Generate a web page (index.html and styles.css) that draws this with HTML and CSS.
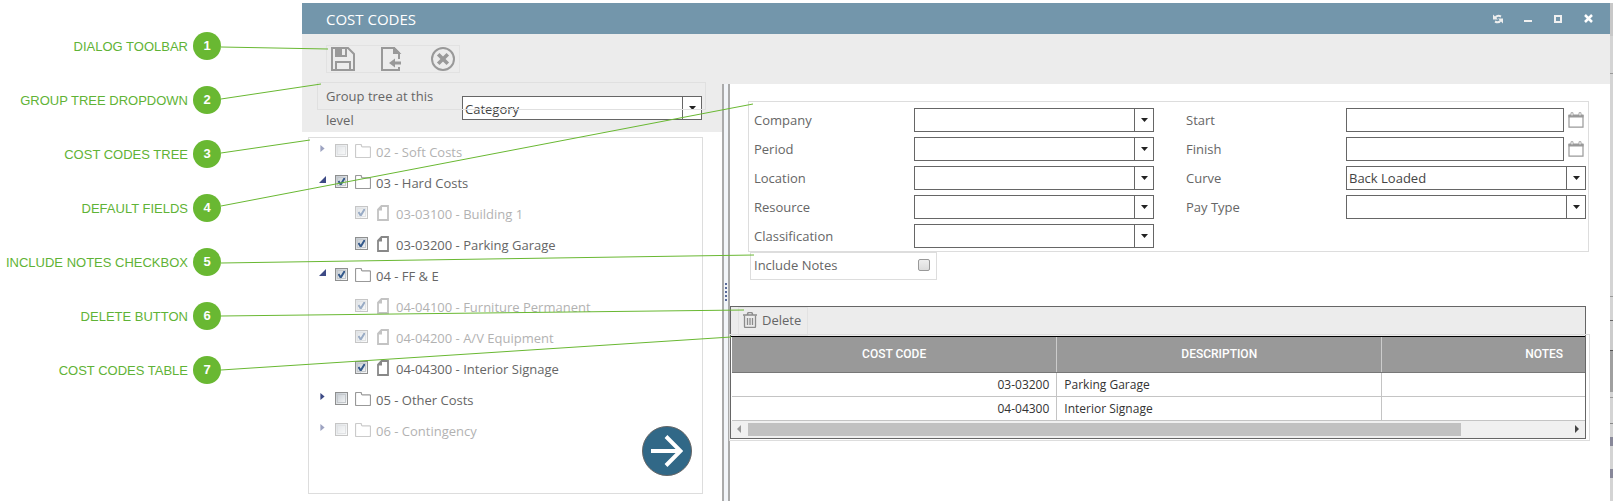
FILE: index.html
```
<!DOCTYPE html>
<html lang="en">
<head>
    <meta charset="UTF-8">
    <meta name="viewport" content="width=device-width, initial-scale=1.0">
    <title>Cost Codes</title>
    <link rel="stylesheet" href="styles.css">
</head>
<body>

    <!-- Shared icons -->
    <svg class="sprite" aria-hidden="true">
        <symbol id="folder" viewBox="0 0 16 14">
            <path d="M1.500 .5h4q1 0 1 1v.5q0 .8 1 .8h7q1 0 1 1v8.700q0 1-1 1h-13q-1 0-1-1v-11q0-1 1-1z" fill="none" stroke="currentColor" stroke-width="1.200"/>
        </symbol>
        <symbol id="doc" viewBox="0 0 12 16">
            <path d="M4.500 1H11v14H1V4.500z" fill="none" stroke="currentColor" stroke-width="1.800"/>
            <path d="M5 .5v5H.5z" fill="currentColor"/>
        </symbol>
        <symbol id="calendar" viewBox="0 0 16 16">
            <path d="M1 3.500h14v11.700H1z" fill="none" stroke="currentColor" stroke-width="1.200"/>
            <path d="M.5 2.500h15v3H.5z" fill="currentColor"/>
            <path d="M3 .7h2v3H3zM11 .7h2v3h-2z" fill="#fff" stroke="currentColor" stroke-width=".8"/>
        </symbol>
    </svg>

    <main class="page">
        <ol class="callouts">
            <li>DIALOG TOOLBAR <b>1</b></li>
            <li>GROUP TREE DROPDOWN <b>2</b></li>
            <li>COST CODES TREE <b>3</b></li>
            <li>DEFAULT FIELDS <b>4</b></li>
            <li>INCLUDE NOTES CHECKBOX <b>5</b></li>
            <li>DELETE BUTTON <b>6</b></li>
            <li>COST CODES TABLE <b>7</b></li>
        </ol>

        <section class="dialog">
            <header class="titlebar">
                <h1>COST CODES</h1>
                <button aria-label="Refresh">
                    <svg width="10" height="10" viewBox="0 0 10 10" fill="none" stroke="#eee" stroke-width="2"><path d="M2 4Q4 .5 8 2.500M8 6Q6 9.500 2 7.500"/><path d="M0 .5v5h5zM10 9.500v-5H5z" fill="#eee" stroke="none"/></svg>
                </button>
                <button aria-label="Minimize">
                    <svg width="8" height="8" viewBox="0 0 8 8"><path d="M0 5h8v2H0z" fill="#f0f0f0"/></svg>
                </button>
                <button aria-label="Maximize">
                    <svg width="8" height="8" viewBox="0 0 8 8"><path d="M1 1h6v6H1z" fill="none" stroke="#f0f0f0" stroke-width="2"/></svg>
                </button>
                <button aria-label="Close">
                    <svg width="9" height="9" viewBox="0 0 9 9"><path d="M1 1l7 7M8 1L1 8" stroke="#fff" stroke-width="2.500"/></svg>
                </button>
            </header>

            <div class="toolbar">
                <div class="tools">
                    <button aria-label="Save">
                        <svg width="24" height="24" viewBox="0 0 24 24" fill="none" stroke="#999" stroke-width="2"><path d="M1 1h16l6 6v16H1z"/><path d="M5 23v-8h14v8"/><path d="M5 1v8h10V1"/><path d="M5 1h5v8H5z" fill="#999"/></svg>
                    </button>
                    <button aria-label="Save and close">
                        <svg width="24" height="24" viewBox="0 0 24 24" fill="none" stroke="#999" stroke-width="2"><path d="M18 12V6l-5-5H1v22h17v-3"/><path d="M13 1v5h5z" fill="#999"/><path d="M20 16h-8" stroke-width="3"/><path d="M14 11.500v9L8 16z" fill="#999" stroke="none"/></svg>
                    </button>
                    <button aria-label="Cancel">
                        <svg width="24" height="24" viewBox="0 0 24 24" fill="none" stroke="#999"><circle cx="12" cy="12" r="11" stroke-width="2"/><path d="M7.200 7.200l9.600 9.600M16.800 7.200l-9.600 9.600" stroke-width="3.600"/></svg>
                    </button>
                </div>
            </div>

            <div class="panes">
                <div class="left">
                    <div class="group">
                        <label for="groupLevel">Group tree at this level</label>
                        <select id="groupLevel"><option>Category</option></select>
                        <span class="group-outline"></span>
                    </div>

                    <div class="tree-box">
                        <ul class="tree">
                            <li class="faded"><i class="closed"></i><input type="checkbox" id="c02"><svg class="folder"><use href="#folder"/></svg><label for="c02">02 - Soft Costs</label></li>
                            <li><i class="open"></i><input type="checkbox" id="c03" checked><svg class="folder"><use href="#folder"/></svg><label for="c03">03 - Hard Costs</label></li>
                            <li class="child faded"><input type="checkbox" id="c03100" checked><svg class="doc"><use href="#doc"/></svg><label for="c03100">03-03100 - Building 1</label></li>
                            <li class="child"><input type="checkbox" id="c03200" checked><svg class="doc"><use href="#doc"/></svg><label for="c03200">03-03200 - Parking Garage</label></li>
                            <li><i class="open"></i><input type="checkbox" id="c04" checked><svg class="folder"><use href="#folder"/></svg><label for="c04">04 - FF &amp; E</label></li>
                            <li class="child faded"><input type="checkbox" id="c04100" checked><svg class="doc"><use href="#doc"/></svg><label for="c04100">04-04100 - Furniture Permanent</label></li>
                            <li class="child faded"><input type="checkbox" id="c04200" checked><svg class="doc"><use href="#doc"/></svg><label for="c04200">04-04200 - A/V Equipment</label></li>
                            <li class="child"><input type="checkbox" id="c04300" checked><svg class="doc"><use href="#doc"/></svg><label for="c04300">04-04300 - Interior Signage</label></li>
                            <li><i class="closed"></i><input type="checkbox" id="c05"><svg class="folder"><use href="#folder"/></svg><label for="c05">05 - Other Costs</label></li>
                            <li class="faded"><i class="closed"></i><input type="checkbox" id="c06"><svg class="folder"><use href="#folder"/></svg><label for="c06">06 - Contingency</label></li>
                        </ul>
                        <button class="move" aria-label="Add to table">
                            <svg width="32" height="32" viewBox="0 0 32 32" fill="none" stroke="#fff" stroke-width="4"><path d="M0 16h29M15 1.500L29.500 16 15 30.500"/></svg>
                        </button>
                    </div>
                </div>

                <div class="splitter"><span></span></div>

                <div class="right">
                    <form class="fields">
                        <label for="company">Company</label>
                        <select id="company"><option></option></select>
                        <label for="start" class="second">Start</label>
                        <div class="date"><input type="text" id="start"><button type="button" aria-label="Pick start date"><svg width="16" height="16"><use href="#calendar"/></svg></button></div>

                        <label for="period">Period</label>
                        <select id="period"><option></option></select>
                        <label for="finish" class="second">Finish</label>
                        <div class="date"><input type="text" id="finish"><button type="button" aria-label="Pick finish date"><svg width="16" height="16"><use href="#calendar"/></svg></button></div>

                        <label for="location">Location</label>
                        <select id="location"><option></option></select>
                        <label for="curve" class="second">Curve</label>
                        <select id="curve"><option>Back Loaded</option></select>

                        <label for="resource">Resource</label>
                        <select id="resource"><option></option></select>
                        <label for="paytype" class="second">Pay Type</label>
                        <select id="paytype"><option></option></select>

                        <label for="classification">Classification</label>
                        <select id="classification"><option></option></select>
                    </form>

                    <div class="notes">
                        <label for="notes">Include Notes</label>
                        <input type="checkbox" id="notes">
                    </div>

                    <div class="grid">
                        <div class="grid-bar">
                            <button>
                                <svg width="14" height="16" viewBox="0 0 14 16" fill="none" stroke="#8c8c8c"><path d="M0 3h14M4.500 2.500q0-2 1.500-2h2q1.500 0 1.500 2" stroke-width="1.500"/><path d="M1.500 3.500v11q0 1 1 1h9q1 0 1-1v-11M4.500 6v7M7 6v7M9.500 6v7" stroke-width="1.300"/></svg>
                                Delete
                            </button>
                        </div>
                        <div class="grid-view">
                            <table>
                                <thead>
                                    <tr><th>COST CODE</th><th>DESCRIPTION</th><th>NOTES</th></tr>
                                </thead>
                                <tbody>
                                    <tr><td class="code">03-03200</td><td>Parking Garage</td><td></td></tr>
                                    <tr><td class="code">04-04300</td><td>Interior Signage</td><td></td></tr>
                                </tbody>
                            </table>
                        </div>
                        <div class="scroll">
                            <i class="scroll-left"></i>
                            <div class="track"><div class="thumb"></div></div>
                            <i class="scroll-right"></i>
                        </div>
                        <span class="grid-outline"></span>
                    </div>
                </div>
            </div>
        </section>

        <!-- Edge of the window behind the dialog -->
        <div class="behind"></div>

        <!-- Callout lines -->
        <svg class="lines" width="800" height="500">
            <path d="M221 47L328 49M221 99L321 84M221 153L310 140M221 206L753 104M221 263L754 255M221 316L744 310M221 370L731 337"/>
        </svg>
    </main>

</body>
</html>
```
FILE: styles.css
```
* {
    box-sizing: border-box;
}

body {
    margin: 0;
    background-color: #fff;
    font-family: "Open Sans", "Noto Sans", sans-serif;
    font-size: 13px;
    color: #666;
}

button {
    padding: 0;
    border: none;
    background: none;
    font: inherit;
    color: inherit;
    cursor: pointer;
}

svg {
    display: block;
    flex: none;
}

.sprite {
    position: absolute;
    width: 0;
    height: 0;
}

.page {
    position: relative;
    display: flex;
    padding: 3px 3px 3px 0;
}

/* Callouts */
.callouts {
    flex: none;
    width: 302px;
    margin: 0;
    padding: 16px 81px 0 0;
    list-style: none;
    font-family: "Liberation Sans", Arial, sans-serif;
    font-size: 13px;
    color: #5fb336;
}

.callouts li {
    display: flex;
    align-items: center;
    justify-content: flex-end;
    gap: 5px;
    height: 54px;
}

.callouts b {
    width: 28px;
    height: 28px;
    border-radius: 50%;
    background-color: #69b832;
    color: #fff;
    line-height: 28px;
    text-align: center;
}

.lines {
    position: absolute;
    top: 0;
    left: 0;
    pointer-events: none;
    fill: none;
    stroke: #69b832;
}

/* Dialog */
.dialog {
    flex: 1;
    min-width: 0;
}

.titlebar {
    display: flex;
    align-items: center;
    gap: 2px;
    height: 31px;
    padding: 0 8px 0 24px;
    background-color: #7396ab;
}

.titlebar h1 {
    flex: 1;
    margin: 0;
    font-size: 15px;
    font-weight: normal;
    color: #fff;
}

.titlebar button {
    display: flex;
    align-items: center;
    justify-content: center;
    width: 28px;
    height: 24px;
}

.toolbar {
    display: flex;
    padding: 11px 24px;
    background-color: #ececec;
}

.tools {
    display: flex;
    gap: 26px;
    padding: 1px 4px;
    border: 1px solid #e2e2e2;
}

.panes {
    display: flex;
}

.left {
    flex: none;
    width: 420px;
}

.group {
    position: relative;
    display: flex;
    align-items: center;
    padding: 0 20px 0 24px;
    background-color: #ececec;
    line-height: 24px;
}

.group label {
    width: 136px;
    padding-right: 20px;
}

.group select {
    flex: 1;
}

.group-outline {
    position: absolute;
    top: -2px;
    left: 15px;
    right: 16px;
    height: 28px;
    border: 1px solid #e0e0e0;
    pointer-events: none;
}

select {
    appearance: none;
    width: 100%;
    height: 24px;
    padding: 0 22px 1px 2px;
    border: 1px solid #666;
    border-radius: 0;
    background-color: #fff;
    background-image:
        url("data:image/svg+xml,%3Csvg xmlns='http://www.w3.org/2000/svg' width='7' height='4'%3E%3Cpath d='M0 0h7L3.500 4z' fill='%23222'/%3E%3C/svg%3E"),
        linear-gradient(#666, #666);
    background-size: 7px 4px, 1px 100%;
    background-position: right 5px center, right 18px top;
    background-repeat: no-repeat;
    font: inherit;
    color: #444;
}

/* Tree */
.tree-box {
    position: relative;
    min-height: 357px;
    margin: 5px 19px 7px 6px;
    border: 1px solid #ddd;
}

.tree {
    margin: 0;
    padding: 0;
    list-style: none;
}

.tree li {
    display: flex;
    align-items: center;
    height: 31px;
    padding: 0 0 6px 10px;
}

.tree li.child {
    padding-left: 46px;
}

.tree .faded {
    opacity: 0.5;
}

.tree i {
    width: 7px;
    height: 7px;
    margin: 0 9px 4px 0;
    background-color: #3d4a85;
}

.tree i.closed {
    clip-path: polygon(20% 0, 80% 50%, 20% 100%);
}

.tree i.open {
    clip-path: polygon(100% 0, 100% 100%, 0 100%);
}

.tree input {
    appearance: none;
    flex: none;
    width: 13px;
    height: 13px;
    margin: 0;
    border: 1px solid #8e8f8f;
    outline: 1px solid #c4c8cc;
    outline-offset: -3px;
    background: linear-gradient(135deg, #c2c9d0, #fafafa);
}

.tree input:checked {
    background:
        url("data:image/svg+xml,%3Csvg xmlns='http://www.w3.org/2000/svg' width='11' height='11'%3E%3Cpath d='M2.500 5l2.200 3.500L9 1.500' fill='none' stroke='%23355a8c' stroke-width='2'/%3E%3C/svg%3E") center no-repeat,
        linear-gradient(135deg, #c2c9d0, #fafafa);
}

.tree .folder {
    width: 16px;
    height: 14px;
    margin: 0 5px 0 7px;
    color: #999;
}

.tree .doc {
    width: 12px;
    height: 16px;
    margin: 0 7px 0 9px;
    color: #888;
}

.tree label {
    padding-top: 2px;
    line-height: 20px;
}

.move {
    position: absolute;
    right: 10px;
    bottom: 17px;
    display: flex;
    align-items: center;
    justify-content: center;
    width: 50px;
    height: 50px;
    border: 1px solid #666;
    border-radius: 50%;
    background-color: #316887;
}

.splitter {
    display: flex;
    align-items: center;
    flex: none;
    width: 8px;
    padding-left: 1px;
    border: solid #aaa;
    border-width: 0 2px;
    background-color: #f2f5f9;
}

.splitter span {
    width: 2px;
    height: 19px;
    background: repeating-linear-gradient(#5a6a9a 0 2px, transparent 2px 4px);
}

/* Right pane */
.right {
    flex: 1;
    min-width: 0;
    padding: 17px 21px 0 0;
}

.fields {
    display: grid;
    grid-template-columns: 160px minmax(0, 1fr) 192px minmax(0, 1fr);
    gap: 5px 0;
    align-items: center;
    margin-left: 18px;
    padding: 6px 2px 3px 5px;
    border: 1px solid #ddd;
}

.fields .second {
    padding-left: 32px;
}

.date {
    display: flex;
    align-items: center;
    gap: 4px;
    padding-right: 2px;
    color: #999;
}

.date input {
    flex: 1;
    min-width: 0;
    height: 24px;
    border: 1px solid #666;
    font: inherit;
}

.notes {
    display: flex;
    align-items: center;
    justify-content: space-between;
    width: 187px;
    height: 28px;
    margin-left: 20px;
    padding: 0 6px 2px 3px;
    border: 1px solid #ddd;
}

.notes input {
    appearance: none;
    width: 12px;
    height: 12px;
    margin: 0;
    border: 1px solid #999;
    border-radius: 2px;
    background: linear-gradient(#eee, #dcdcdc);
}

/* Cost codes table */
.grid {
    position: relative;
    margin: 26px 3px 0 0;
    border: 1px solid #666;
}

.grid-bar {
    display: flex;
    padding: 0 7px;
    border-bottom: 1px solid #000;
    background-color: #ececec;
}

.grid-bar button {
    display: flex;
    align-items: center;
    gap: 5px;
    width: 70px;
    height: 29px;
    padding: 0 0 3px 4px;
    border: 1px solid #e2e2e2;
}

.grid-view {
    overflow: hidden;
    padding-left: 1px;
}

table {
    width: 975px;
    table-layout: fixed;
    border-collapse: collapse;
    font-size: 12px;
    color: #333;
}

th {
    height: 35px;
    padding: 0;
    border-right: 1px solid #ccc;
    border-bottom: 1px solid #777;
    background-color: #999;
    font-family: Roboto, sans-serif;
    font-weight: 500;
    color: #fff;
}

td {
    height: 24px;
    padding: 0 7px;
    border-right: 1px solid #c4c4c4;
    border-bottom: 1px solid #c4c4c4;
}

td.code {
    text-align: right;
}

.scroll {
    display: flex;
    align-items: center;
    gap: 7px;
    height: 17px;
    padding: 0 6px;
    background-color: #f0f0f0;
}

.scroll i {
    width: 4px;
    height: 8px;
}

.scroll-left {
    background-color: #999;
    clip-path: polygon(100% 0, 100% 100%, 0 50%);
}

.scroll-right {
    background-color: #444;
    clip-path: polygon(0 0, 100% 50%, 0 100%);
}

.track {
    flex: 1;
}

.thumb {
    width: 87%;
    height: 13px;
    background-color: #c1c1c1;
}

.grid-outline {
    position: absolute;
    top: 27px;
    right: -5px;
    bottom: -3px;
    left: -2px;
    border: 1px solid #ddd;
    pointer-events: none;
}

.behind {
    flex: none;
    width: 3px;
    background: linear-gradient(
        #c8c8c8 33px, #d4d4d4 33px 70px, #999 70px 71px, #d4d4d4 71px 293px,
        #999 293px 294px, #d4d4d4 294px 317px, #666 317px 318px, #ccc 318px 347px,
        #555 347px 348px, #a0a0a0 348px 389px, #d4d4d4 389px 394px, #999 394px 395px,
        #d4d4d4 395px 420px, #888 420px 421px, #d4d4d4 421px 434px, #889 434px 443px,
        #d4d4d4 443px 466px, #889 466px 475px, #d4d4d4 475px);
}
```
